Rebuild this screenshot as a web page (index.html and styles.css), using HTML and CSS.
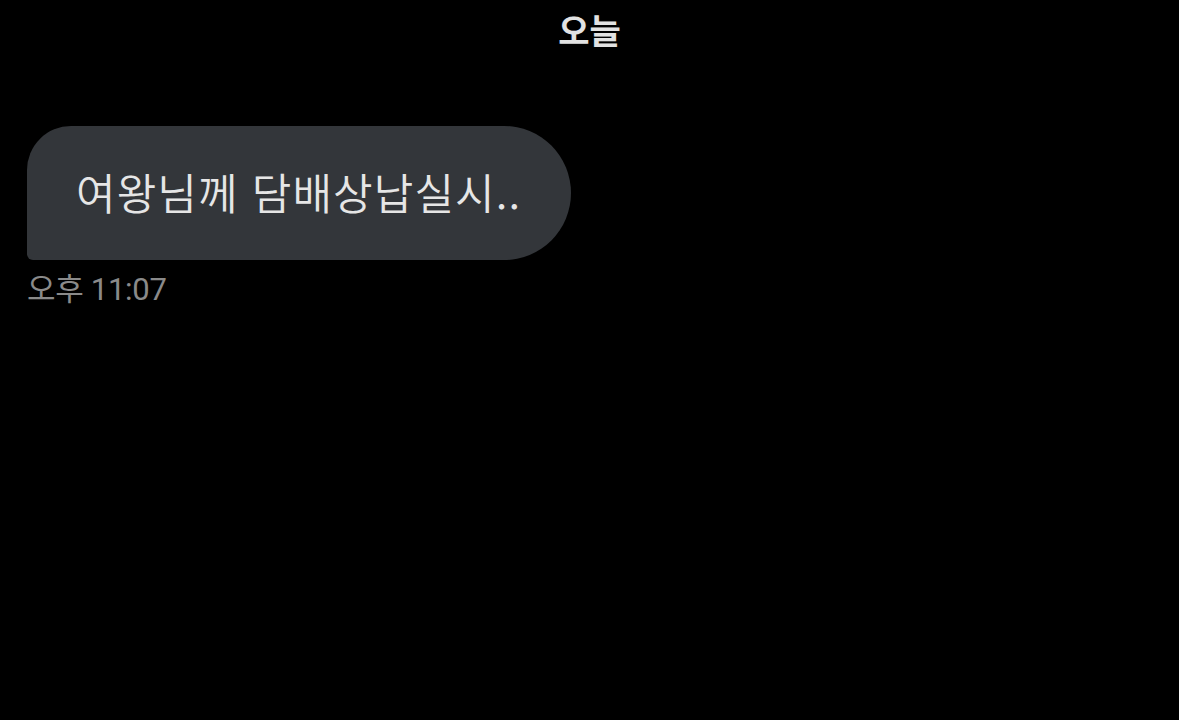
FILE: index.html
```html
<!DOCTYPE html>
<html lang="ko">
<head>
<meta charset="utf-8">
<link rel="stylesheet" href="styles.css">
</head>
<body>
<div class="screen">
  <div class="day">오늘</div>
  <div class="msg">
    <div class="bubble">여왕님께 담배상납실시..</div>
    <div class="time">오후 11:07</div>
  </div>
</div>
</body>
</html>
```

FILE: styles.css
```css
html, body {
  margin: 0;
  padding: 0;
  background: #000;
}
.screen {
  width: 1179px;
  height: 720px;
  background: #000;
  font-family: "Noto Sans CJK KR", "Noto Sans", sans-serif;
}
.day {
  text-align: center;
  color: #e2e2e2;
  font-size: 34px;
  font-weight: 700;
  line-height: 40px;
  padding-top: 10px;
}
.msg {
  padding: 76px 0 0 27px;
  display: flex;
  flex-direction: column;
  align-items: flex-start;
}
.bubble {
  background: #33363a;
  color: #e6e6e6;
  font-size: 43px;
  font-weight: 350;
  height: 134px;
  box-sizing: border-box;
  display: flex;
  align-items: center;
  padding: 0 50px 4px 49px;
  border-radius: 44px 67px 67px 6px;
  letter-spacing: 1.1px;
}
.time {
  margin-top: 12px;
  color: #8a8a8a;
  font-family: "Roboto", "Noto Sans CJK KR", sans-serif;
  font-size: 31px;
  line-height: 36px;
  letter-spacing: -0.3px;
}
```
